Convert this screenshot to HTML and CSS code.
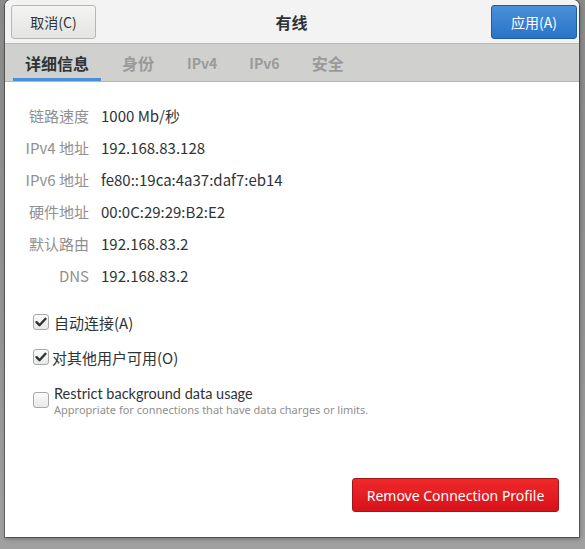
FILE: index.html
```html
<!DOCTYPE html>
<html lang="zh">
<head>
<meta charset="utf-8">
<link rel="stylesheet" href="styles.css">
</head>
<body>
<div class="desk">
  <div class="dialog">
    <div class="header">
      <button class="btn btn-cancel">取消(C)</button>
      <div class="title">有线</div>
      <button class="btn btn-apply">应用(A)</button>
    </div>
    <div class="tabs">
      <div class="tab active">详细信息</div>
      <div class="tab">身份</div>
      <div class="tab latin">IPv4</div>
      <div class="tab latin">IPv6</div>
      <div class="tab">安全</div>
    </div>
    <div class="content">
      <div class="info">
        <div class="label">链路速度</div><div class="value">1000 Mb/秒</div>
        <div class="label">IPv4 地址</div><div class="value">192.168.83.128</div>
        <div class="label">IPv6 地址</div><div class="value">fe80::19ca:4a37:daf7:eb14</div>
        <div class="label">硬件地址</div><div class="value">00:0C:29:29:B2:E2</div>
        <div class="label">默认路由</div><div class="value">192.168.83.2</div>
        <div class="label">DNS</div><div class="value">192.168.83.2</div>
      </div>
      <div class="checks">
        <label class="check"><span class="box checked"><svg viewBox="0 0 16 16" width="16" height="16"><path d="M3.5 8.2 L6.5 11.2 L12.5 4.8" fill="none" stroke="#2e3436" stroke-width="2.4" stroke-linecap="round" stroke-linejoin="round"/></svg></span><span class="ctext">自动连接(A)</span></label>
        <label class="check"><span class="box checked"><svg viewBox="0 0 16 16" width="16" height="16"><path d="M3.5 8.2 L6.5 11.2 L12.5 4.8" fill="none" stroke="#2e3436" stroke-width="2.4" stroke-linecap="round" stroke-linejoin="round"/></svg></span><span class="ctext tight">对其他用户可用(O)</span></label>
        <label class="check multi"><span class="box"></span><span class="ctext"><span class="main">Restrict background data usage</span><span class="sub">Appropriate for connections that have data charges or limits.</span></span></label>
      </div>
      <div class="footer">
        <button class="btn btn-remove">Remove Connection Profile</button>
      </div>
    </div>
  </div>
</div>
</body>
</html>
```
FILE: styles.css
```css
* { box-sizing: border-box; }
html, body {
  margin: 0;
  padding: 0;
  width: 585px;
  height: 549px;
  overflow: hidden;
}
body {
  background: linear-gradient(to bottom, #8a8a8a 0%, #939393 60%, #a0a0a0 100%);
  font-family: "Noto Sans", "Noto Sans CJK SC", sans-serif;
  color: #2e3436;
}
.desk {
  padding-left: 5px;
  width: 585px;
  height: 549px;
}
.dialog {
  width: 574px;
  height: 537px;
  background: #ffffff;
  border-radius: 6px 6px 0 0;
  box-shadow: 0 0 0 1px rgba(0,0,0,0.35), 1px 2px 4px rgba(0,0,0,0.3);
  display: flex;
  flex-direction: column;
  overflow: hidden;
}
.header {
  height: 44px;
  background: #f3f3f3;
  border-bottom: 1px solid #b8b8b5;
  display: flex;
  align-items: center;
  justify-content: space-between;
  padding: 0 2px 0 6px;
}
.btn {
  font-family: "Noto Sans CJK SC", "Noto Sans", sans-serif;
  font-size: 14px;
  border-radius: 3px;
  cursor: default;
}
.btn-cancel {
  width: 85px;
  height: 34px;
  border: 1px solid #b6b6b3;
  background: linear-gradient(to bottom, #f4f4f3, #e4e4e2);
  color: #2e3436;
  margin-top: 1px;
}
.btn-apply {
  width: 86px;
  height: 34px;
  border: 1px solid #1b5ba8;
  background: linear-gradient(to bottom, #4a90d9, #2a73c9);
  color: #ffffff;
  margin-top: 1px;
}
.title {
  font-family: "Noto Sans CJK SC", sans-serif;
  font-weight: bold;
  font-size: 16px;
  color: #2e3436;
  margin-right: 4px;
}
.tabs {
  height: 38px;
  background: #d0d0cf;
  border-bottom: 1px solid #b6b6b3;
  display: flex;
  padding-left: 8px;
}
.tab {
  font-family: "Noto Sans CJK SC", sans-serif;
  font-size: 16px;
  font-weight: bold;
  color: #9a9a9a;
  padding: 0 12px;
  margin-right: 9px;
  display: flex;
  align-items: center;
  border-bottom: 3px solid transparent;
  padding-top: 3px;
}
.tab.latin {
  font-size: 14px;
  margin-right: 8px;
}
.tab.active {
  color: #2e3436;
  border-bottom-color: #4a90d9;
}
.content {
  flex: 1;
  display: flex;
  flex-direction: column;
  padding: 24px 0 0 0;
}
.info {
  display: grid;
  grid-template-columns: 84px auto;
  column-gap: 12px;
  row-gap: 13px;
  justify-content: start;
  font-size: 15px;
  line-height: 19px;
}
.label {
  text-align: right;
  color: #909090;
  font-family: "Noto Sans CJK SC", sans-serif;
}
.value {
  color: #2e3436;
  font-family: "Noto Sans CJK SC", sans-serif;
}
.checks {
  margin-top: 27px;
  padding-left: 28px;
  display: flex;
  flex-direction: column;
  gap: 15px;
}
.check {
  display: flex;
  align-items: center;
  font-size: 15px;
  font-family: "Noto Sans CJK SC", sans-serif;
  color: #2e3436;
  height: 20px;
}
.check.multi {
  align-items: flex-start;
  height: auto;
  margin-top: 2px;
}
.box {
  width: 16px;
  height: 16px;
  border: 1px solid #a8a8a5;
  border-radius: 3px;
  background: linear-gradient(to bottom, #fbfbfb, #e8e8e7);
  margin-right: 5px;
  flex: none;
  display: flex;
  align-items: center;
  justify-content: center;
}
.box svg { display: block; margin: -1px; }
.check.multi .box { margin-top: 8px; }
.ctext.tight { margin-left: -2px; }
.ctext .main {
  display: block;
  line-height: 19px;
  font-family: "Lato", sans-serif;
  font-size: 14.5px;
}
.ctext .sub {
  display: block;
  font-size: 11px;
  color: #8f8f8f;
  line-height: 14px;
  font-family: "Noto Sans", sans-serif;
}
.footer {
  margin-top: auto;
  display: flex;
  justify-content: flex-end;
  padding: 0 20px 25px 0;
}
.btn-remove {
  width: 207px;
  height: 34px;
  border: 1px solid #a5141a;
  background: linear-gradient(to bottom, #ef2929, #d8121b);
  color: #ffffff;
  font-family: "Noto Sans", sans-serif;
  font-size: 14px;
}
```
